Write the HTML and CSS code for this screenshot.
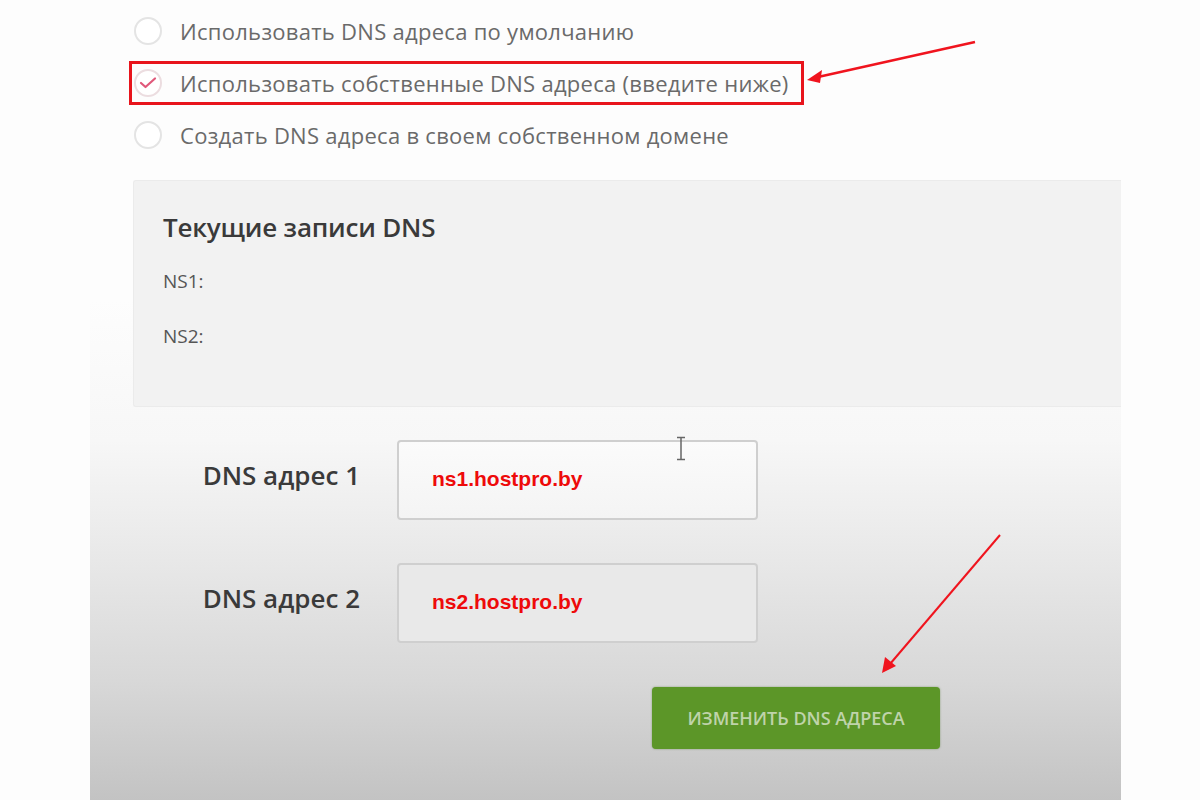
FILE: index.html
```html
<html>
   <head>
      <title>DNS адреса</title>
      <link rel="stylesheet" href="styles.css">
   </head>
   <body>
      <div id="screen">
         <div id="choices">
            <div class="choice">
               <span class="radio"></span>
               <span class="choiceText">Использовать DNS адреса по умолчанию</span>
            </div>
            <div class="choice marked">
               <span class="radio checked">
                  <svg width="18" height="14" viewBox="0 0 18 14">
                     <path d="M2 7 L6.5 11 L16 2.5" fill="none" stroke="#e0587a" stroke-width="2.2" stroke-linecap="round" stroke-linejoin="round" />
                  </svg>
               </span>
               <span class="choiceText">Использовать собственные DNS адреса (введите ниже)</span>
            </div>
            <div class="choice">
               <span class="radio"></span>
               <span class="choiceText">Создать DNS адреса в своем собственном домене</span>
            </div>
         </div>

         <div id="current">
            <h2>Текущие записи DNS</h2>
            <div class="nsLine">NS1:</div>
            <div class="nsLine">NS2:</div>
         </div>

         <div id="dnsform">
            <div class="formRow">
               <label>DNS адрес 1</label>
               <div class="field first">ns1.hostpro.by</div>
            </div>
            <div class="formRow">
               <label>DNS адрес 2</label>
               <div class="field">ns2.hostpro.by</div>
            </div>
            <button id="saveBtn">ИЗМЕНИТЬ DNS АДРЕСА</button>
         </div>
      </div>

      <!-- annotations drawn over the capture -->
      <svg id="marks" width="1200" height="800" viewBox="0 0 1200 800">
         <line x1="975" y1="42" x2="818" y2="77" stroke="#f0141e" stroke-width="2.5" />
         <path d="M807 80 L822 70 L820 83 Z" fill="#f0141e" />
         <line x1="1000" y1="535" x2="890" y2="664" stroke="#f0141e" stroke-width="2" />
         <path d="M882 673 L885 657 L896 666 Z" fill="#f0141e" />
         <g stroke="#666" stroke-width="1.5" fill="none">
            <line x1="681" y1="438" x2="681" y2="459" />
            <line x1="677" y1="437.5" x2="685" y2="437.5" />
            <line x1="677" y1="459.5" x2="685" y2="459.5" />
         </g>
      </svg>
   </body>
</html>
```

FILE: styles.css
```css
html {
   height: 100%;
   margin: 0px;
   padding: 0px;
}

body {
   margin: 0px;
   background-color: #fdfdfd;
   font-family: "Open Sans", "Noto Sans", sans-serif;
   color: #333;
   position: relative;
   overflow: hidden;
}

#screen {
   margin-left: 90px;
   width: 1031px;
   height: 800px;
   padding-top: 9px;
   box-sizing: border-box;
   background: linear-gradient(
      to bottom,
      #fdfdfd 0px,
      #fdfdfd 300px,
      #f7f7f7 440px,
      #e8e8e8 560px,
      #d8d8d8 680px,
      #c3c3c3 800px
   );
}

#choices {
   display: flex;
   flex-direction: column;
   align-items: flex-start;
   gap: 8px;
   margin-left: 39px;
}

.choice {
   display: flex;
   align-items: center;
   gap: 18px;
   height: 44px;
   box-sizing: border-box;
   border: 3px solid transparent;
   padding: 0px 12px 0px 2px;
}

.choice.marked {
   border-color: #e8141c;
}

.radio {
   width: 28px;
   height: 28px;
   box-sizing: border-box;
   border: 2px solid #e4e4e4;
   border-radius: 50%;
   background-color: #fff;
   display: flex;
   align-items: center;
   justify-content: center;
}

.radio.checked {
   border-color: #ecdde0;
}

.choiceText {
   font-size: 22px;
   color: #6a6a6a;
   letter-spacing: 0.28px;
}

#current {
   margin: 23px 0px 0px 43px;
   height: 227px;
   box-sizing: border-box;
   background-color: #f2f2f2;
   border: 1px solid #ebebeb;
   border-right: none;
   border-radius: 3px 0px 0px 3px;
   padding: 28px 29px;
}

#current h2 {
   margin: 0px 0px 24px 0px;
   font-size: 26px;
   font-weight: 600;
   color: #3a3a3a;
   letter-spacing: -0.2px;
   line-height: 36px;
}

.nsLine {
   font-size: 19px;
   color: #555;
   line-height: 24px;
   margin-bottom: 31px;
}

#dnsform {
   display: flex;
   flex-direction: column;
   gap: 43px;
   margin-top: 33px;
   margin-left: 70px;
}

.formRow {
   display: flex;
   align-items: center;
   gap: 37px;
}

.formRow label {
   width: 200px;
   text-align: right;
   font-size: 26px;
   font-weight: 600;
   color: #3a3a3a;
   letter-spacing: 0px;
   margin-top: -10px;
}

.field {
   width: 361px;
   height: 80px;
   box-sizing: border-box;
   border: 2px solid #cfcfcf;
   border-radius: 4px;
   background-color: #e9e9e9;
   padding: 0px 0px 2px 33px;
   display: flex;
   align-items: center;
   font-family: "Liberation Sans", Arial, sans-serif;
   font-weight: bold;
   font-size: 21px;
   color: #ee0a0a;
}

.field.first {
   background: linear-gradient(to bottom, #fbfbfb, #f4f4f4);
}

#saveBtn {
   align-self: flex-start;
   margin-top: 1px;
   margin-left: 492px;
   width: 288px;
   height: 62px;
   border: none;
   border-radius: 4px;
   background-color: #5c9628;
   box-shadow: 0px 0px 2px rgba(60, 100, 20, 0.5);
   color: #bfd3aa;
   font-family: "Open Sans", sans-serif;
   font-weight: 600;
   font-size: 18px;
   letter-spacing: 0px;
}

#marks {
   position: absolute;
   top: 0px;
   left: 0px;
   pointer-events: none;
}
```
